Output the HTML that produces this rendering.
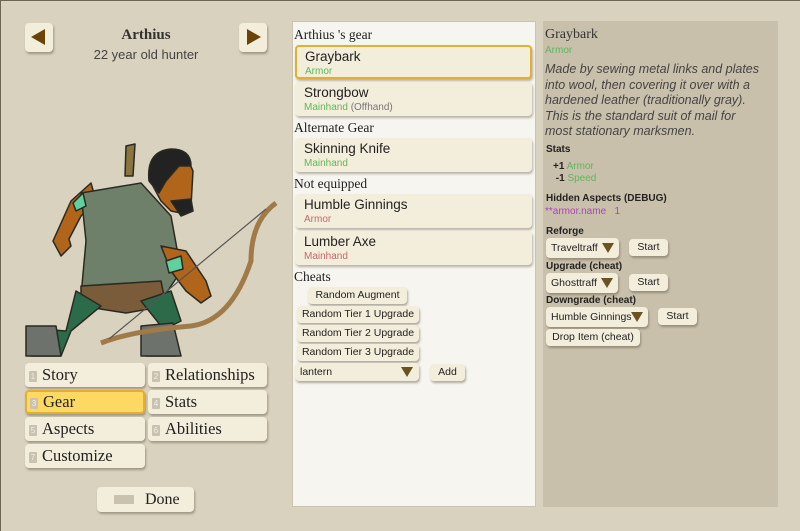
<!DOCTYPE html>
<html><head><style>
*{margin:0;padding:0;box-sizing:border-box}
body{width:800px;height:531px;background:#d8d2be;font-family:"Liberation Sans",sans-serif;position:relative;overflow:hidden;border-top:1px solid #6b6650;border-left:1px solid #6b6650}
.a{position:absolute}
.serif{font-family:"Liberation Serif",serif}
.btn{position:absolute;background:#f3eddb;border-radius:4px;box-shadow:1px 2px 2px rgba(90,80,60,.45);color:#222}
.sel{background:#fdd862;border:2px solid #e0b030}
.num{display:inline-block;width:8px;height:11px;background:#c9c2ae;color:#eee;font-size:8px;text-align:center;line-height:11px;border-radius:1px;margin-right:5px;vertical-align:1px;font-family:"Liberation Sans"}
.tab{font-family:"Liberation Serif",serif;font-size:16.5px;padding-left:4px;line-height:24px}
.card{position:absolute;left:294px;width:237px;background:#f3eddb;border-radius:4px;box-shadow:1px 2px 2px rgba(90,80,60,.4);padding:3px 0 0 9px}
.card .t{font-size:13.5px;color:#222}
.card .s{font-size:10px;margin-top:2px}
.g{color:#5cb85c}.r{color:#c46a6a}
.h{position:absolute;left:293px;font-family:"Liberation Serif",serif;font-size:13.5px;color:#222}
.sb{font-size:10.5px;text-align:center;line-height:17px}
.dd{font-size:10.5px;line-height:18px;padding-left:5px}
.tri{position:absolute;width:0;height:0;border-left:6px solid transparent;border-right:6px solid transparent;border-top:10px solid #6b5220}
.rp{font-size:10px;color:#222}
</style></head><body>
<div class="btn" style="left:24px;top:22px;width:28px;height:29px"><div class="a" style="left:6px;top:6px;width:0;height:0;border-top:8px solid transparent;border-bottom:8px solid transparent;border-right:14px solid #6b4208"></div></div>
<div class="btn" style="left:238px;top:22px;width:28px;height:29px"><div class="a" style="left:8px;top:6px;width:0;height:0;border-top:8px solid transparent;border-bottom:8px solid transparent;border-left:14px solid #6b4208"></div></div>
<div class="a serif" style="left:0;width:290px;top:26px;text-align:center;font-size:15px;font-weight:bold;color:#333">Arthius</div>
<div class="a" style="left:0;width:290px;top:46px;text-align:center;font-size:13px;color:#444">22 year old hunter</div>
<svg class="a" style="left:0;top:130px" width="290" height="230" viewBox="0 0 290 230">
<g stroke="#2a2a22" stroke-width="1.5" stroke-linejoin="round">
<path d="M125 15 L134 13 L132 45 L124 45 Z" fill="#8a7440"/>
<path d="M90 52 L70 70 L52 110 L60 125 L70 115 L68 108 L80 85 L95 70 Z" fill="#b0651a"/>
<path d="M80 62 L140 52 L170 85 L180 140 L160 170 L80 165 L85 110 Z" fill="#6e7f6a"/>
<path d="M80 155 L160 150 L165 175 L125 182 L80 175 Z" fill="#7a5c3a"/>
<path d="M75 160 L65 200 L40 198 L28 210 L30 225 L60 225 L70 200 L100 175 Z" fill="#2c6b4a"/>
<path d="M140 170 L170 160 L180 190 L150 205 L145 225 L175 225 L160 195 Z" fill="#2c6b4a"/>
<path d="M25 195 L55 195 L60 225 L25 225 Z" fill="#6d736c"/>
<path d="M140 195 L172 192 L180 225 L140 225 Z" fill="#6d736c"/>
<path d="M160 115 L185 120 L205 150 L210 165 L200 172 L185 160 L170 140 Z" fill="#b0651a"/>
<path d="M150 32 Q165 15 185 25 L192 40 L190 75 L180 82 L170 80 L160 70 L152 55 Z" fill="#b0651a"/>
<path d="M148 50 Q145 20 170 18 Q190 18 190 35 L178 35 L165 50 L158 62 Z" fill="#222"/>
<path d="M170 70 L190 68 L192 80 L180 85 Z" fill="#222"/>
<path d="M72 72 L82 62 L85 75 L75 80 Z" fill="#5fd0a0"/>
<path d="M165 130 L180 125 L182 138 L168 142 Z" fill="#5fd0a0"/>
</g>
<path d="M275 72 Q250 90 250 130 Q230 190 190 195 Q130 200 100 212" fill="none" stroke="#a07a48" stroke-width="5"/>
<path d="M265 78 L108 208" stroke="#555" stroke-width="1.2"/>
</svg>
<div class="btn tab" style="left:24px;top:362px;width:120px;height:24px"><span class="num">1</span>Story</div>
<div class="btn tab" style="left:147px;top:362px;width:119px;height:24px"><span class="num">2</span>Relationships</div>
<div class="btn tab sel" style="left:24px;top:389px;width:120px;height:24px;line-height:20px;padding-left:3px"><span class="num">3</span>Gear</div>
<div class="btn tab" style="left:147px;top:389px;width:119px;height:24px"><span class="num">4</span>Stats</div>
<div class="btn tab" style="left:24px;top:416px;width:120px;height:24px"><span class="num">5</span>Aspects</div>
<div class="btn tab" style="left:147px;top:416px;width:119px;height:24px"><span class="num">6</span>Abilities</div>
<div class="btn tab" style="left:24px;top:443px;width:120px;height:24px"><span class="num">7</span>Customize</div>
<div class="btn serif" style="left:96px;top:486px;width:97px;height:25px;font-size:16px;line-height:25px"><span class="a" style="left:17px;top:8px;width:20px;height:9px;background:#c9c2ae"></span><span class="a" style="left:48px">Done</span></div>
<div class="a" style="left:291px;top:20px;width:244px;height:486px;background:#f7f5ef;border:1px solid #c9c3b0"></div>
<div class="h" style="top:26px">Arthius 's gear</div>
<div class="card sel" style="top:44px;height:34px;padding:2px 0 0 8px"><div class="t">Graybark</div><div class="s g">Armor</div></div>
<div class="card" style="top:81px;height:34px"><div class="t">Strongbow</div><div class="s"><span class="g">Mainhand</span> <span style="color:#777">(Offhand)</span></div></div>
<div class="h" style="top:119px">Alternate Gear</div>
<div class="card" style="top:137px;height:34px"><div class="t">Skinning Knife</div><div class="s g">Mainhand</div></div>
<div class="h" style="top:175px">Not equipped</div>
<div class="card" style="top:193px;height:34px"><div class="t">Humble Ginnings</div><div class="s r">Armor</div></div>
<div class="card" style="top:230px;height:34px"><div class="t">Lumber Axe</div><div class="s r">Mainhand</div></div>
<div class="h" style="top:268px">Cheats</div>
<div class="btn sb" style="left:307px;top:286px;width:99px">Random Augment</div>
<div class="btn sb" style="left:296px;top:305px;width:122px">Random Tier 1 Upgrade</div>
<div class="btn sb" style="left:296px;top:324px;width:122px">Random Tier 2 Upgrade</div>
<div class="btn sb" style="left:296px;top:343px;width:122px">Random Tier 3 Upgrade</div>
<div class="btn dd" style="left:294px;top:362px;width:124px;height:18px">lantern<div class="tri" style="left:106px;top:4px"></div></div>
<div class="btn sb" style="left:429px;top:363px;width:35px">Add</div>
<div class="a" style="left:542px;top:20px;width:235px;height:486px;background:#c8c0ab"></div>
<div class="a serif" style="left:544px;top:26px;font-size:14px;color:#333">Graybark</div>
<div class="a g" style="left:544px;top:44px;font-size:10px">Armor</div>
<div class="a" style="left:544px;top:61px;width:232px;font-size:12.5px;font-style:italic;color:#444;line-height:15.5px;white-space:nowrap">Made by sewing metal links and plates<br>into wool, then covering it over with a<br>hardened leather (traditionally gray).<br>This is the standard suit of mail for<br>most stationary marksmen.</div>
<div class="a rp" style="left:545px;top:143px;font-weight:bold">Stats</div>
<div class="a rp" style="left:552px;top:160px"><b>+1</b> <span class="g">Armor</span></div>
<div class="a rp" style="left:552px;top:172px"><b>&nbsp;-1</b> <span class="g">Speed</span></div>
<div class="a rp" style="left:545px;top:192px;font-weight:bold">Hidden Aspects (DEBUG)</div>
<div class="a rp" style="left:544px;top:205px;color:#b040c0">**armor.name &nbsp;&nbsp;1</div>
<div class="a rp" style="left:545px;top:225px;font-weight:bold">Reforge</div>
<div class="btn dd" style="left:545px;top:237px;width:73px;height:20px;line-height:20px">Traveltraff<div class="tri" style="left:56px;top:5px"></div></div>
<div class="btn sb" style="left:628px;top:238px;width:39px">Start</div>
<div class="a rp" style="left:545px;top:260px;font-weight:bold">Upgrade (cheat)</div>
<div class="btn dd" style="left:545px;top:272px;width:72px;height:20px;line-height:20px">Ghosttraff<div class="tri" style="left:55px;top:5px"></div></div>
<div class="btn sb" style="left:628px;top:273px;width:39px">Start</div>
<div class="a rp" style="left:545px;top:294px;font-weight:bold">Downgrade (cheat)</div>
<div class="btn dd" style="left:545px;top:306px;width:102px;height:20px;line-height:20px">Humble Ginnings<div class="tri" style="left:85px;top:5px"></div></div>
<div class="btn sb" style="left:657px;top:307px;width:39px">Start</div>
<div class="btn sb" style="left:545px;top:328px;width:94px">Drop Item (cheat)</div>
</body></html>
